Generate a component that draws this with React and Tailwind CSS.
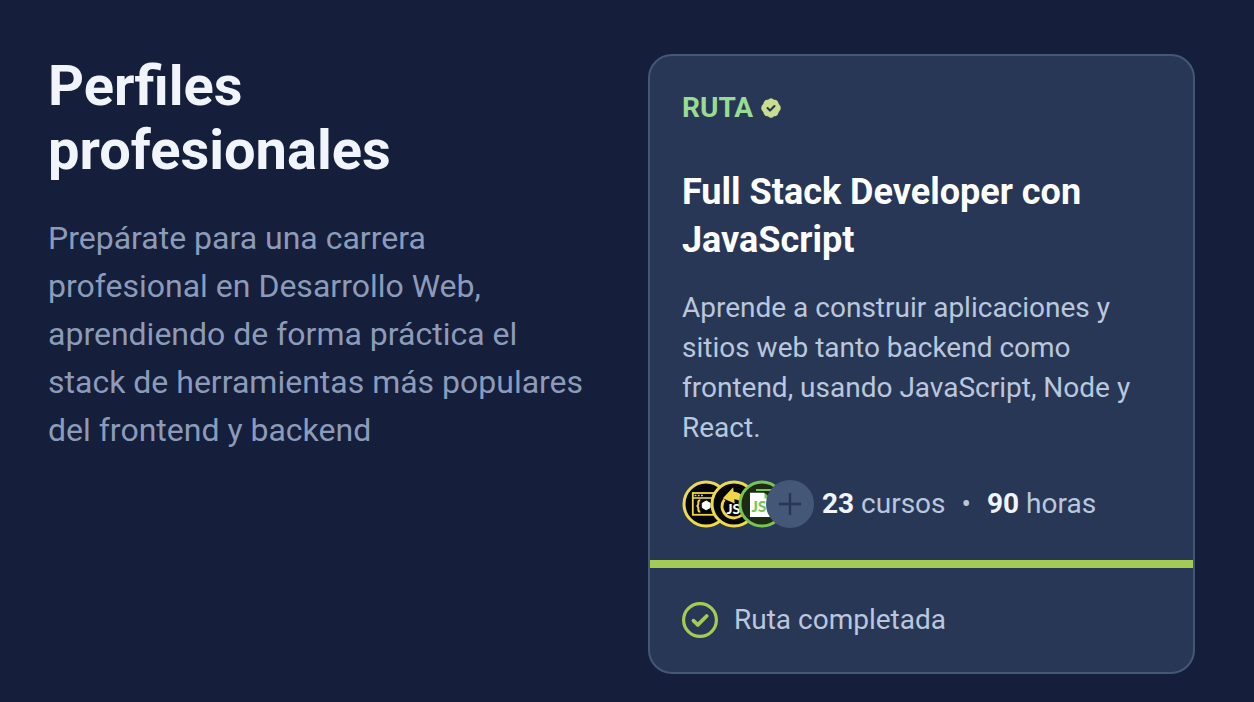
function VerifiedBadge() {
  return (
    <svg className="h-5 w-5" viewBox="0 0 20 20" aria-hidden="true">
      <path
        d="M10 0.2 Q11.7 0.2 12.9 1.8 Q15 1.4 16.4 2.9 Q17.6 4.2 17.7 5.9 Q19.8 7.4 19.8 10 Q19.8 12.6 17.7 14.1 Q17.6 15.8 16.4 17.1 Q15 18.6 12.9 18.2 Q11.7 19.8 10 19.8 Q8.3 19.8 7.1 18.2 Q5 18.6 3.6 17.1 Q2.4 15.8 2.3 14.1 Q0.2 12.6 0.2 10 Q0.2 7.4 2.3 5.9 Q2.4 4.2 3.6 2.9 Q5 1.4 7.1 1.8 Q8.3 0.2 10 0.2Z"
        fill="#c9dd8f"
      />
      <path d="M6.5 10.1 L9 12.6 L13.5 8" fill="none" stroke="#273655" strokeWidth="2.1" strokeLinecap="round" strokeLinejoin="round" />
    </svg>
  );
}

function WindowCourseIcon() {
  return (
    <svg className="h-12 w-12" viewBox="0 0 48 48" aria-hidden="true">
      <circle cx="24" cy="24" r="22" fill="#050505" stroke="#ecdc4a" strokeWidth="3" />
      <rect x="10.8" y="13" width="24" height="21.8" fill="none" stroke="#efd548" strokeWidth="1.8" />
      <path d="M10.6 18H35" stroke="#efd548" strokeWidth="1.6" />
      <path d="M12.6 15.5h1.8M15.8 15.5h1.8M19 15.5h1.8" stroke="#efd548" strokeWidth="1.5" />
      <path d="M18.3 20.3 Q16.3 20.3 16.3 22.3 V24 Q16.3 25.7 14.6 25.9 Q16.3 26.1 16.3 27.8 V29.7 Q16.3 31.7 18.3 31.7" fill="none" stroke="#efd548" strokeWidth="2" />
      <path d="M24.2 21 L28.1 23.2 V27.6 L24.2 29.8 L20.3 27.6 V23.2Z" fill="#fff" stroke="#fff" strokeLinejoin="round" />
    </svg>
  );
}

function LoopCourseIcon() {
  return (
    <svg className="h-12 w-12" viewBox="0 0 48 48" aria-hidden="true">
      <circle cx="24" cy="24" r="22" fill="#050505" stroke="#ecdc4a" strokeWidth="3" />
      <path d="M14.3 19.5 Q10.9 24.5 12.5 29.8 Q15.3 37.9 24 38 Q28.6 37.7 32 35" fill="none" stroke="#efd548" strokeWidth="2.8" />
      <path d="M12.8 18.2 L23.2 7.2 L23.6 11.8 Q30.4 12.4 34 17.6 V24.5 Q30 19.9 24.3 19.3 L24.7 23.4Z" fill="#efd548" />
      <text x="16.5" y="34" fill="#fff" fontFamily="Lato, sans-serif" fontWeight="900" fontSize="14">JS</text>
    </svg>
  );
}

function DocumentCourseIcon() {
  return (
    <svg className="h-12 w-12" viewBox="0 0 48 48" aria-hidden="true">
      <circle cx="24" cy="24" r="22" fill="#1b2b14" stroke="#79c454" strokeWidth="3" />
      <path d="M18 9.9H34V13" fill="none" stroke="#79c454" strokeWidth="2" />
      <path d="M12 12.8H26L33 19.5V37H12Z" fill="#fff" />
      <path d="M26.5 12.8V18.5H33Z" fill="#79c454" />
      <text x="13.5" y="31.5" fill="#79c454" fontFamily="Lato, sans-serif" fontWeight="900" fontSize="15">JS</text>
    </svg>
  );
}

function MoreCourses() {
  return (
    <svg className="h-12 w-12" viewBox="0 0 48 48" aria-hidden="true">
      <circle cx="24" cy="24" r="24" fill="#455777" />
      <path d="M24 13V35M13 24H35" stroke="#273655" strokeWidth="2.4" />
    </svg>
  );
}

function CompletedIcon() {
  return (
    <svg className="h-9 w-9" viewBox="0 0 36 36" aria-hidden="true">
      <circle cx="18" cy="18" r="16.4" fill="none" stroke="#a4cb53" strokeWidth="3.2" />
      <path d="M11.4 18.7 L15.8 22.9 L24.7 14" fill="none" stroke="#a4cb53" strokeWidth="3.8" strokeLinecap="round" strokeLinejoin="round" />
    </svg>
  );
}

function RouteCard() {
  return (
    <article className="overflow-hidden rounded-3xl border-2 border-[#455777] bg-[#293757]">
      <div className="p-8">
        <div className="flex items-center gap-2 text-[28px] leading-10 font-bold text-[#98dc92]">
          <span>RUTA</span>
          <VerifiedBadge />
        </div>
        <h2 className="mt-10 text-4xl leading-12 font-bold text-white">Full Stack Developer con JavaScript</h2>
        <p className="mt-6 text-[28px] leading-10 text-[#bac7dc]">
          Aprende a construir aplicaciones y sitios web tanto backend como frontend, usando JavaScript, Node y React.
        </p>
        <div className="mt-8 flex items-center gap-2">
          <div className="flex -space-x-5">
            <WindowCourseIcon />
            <LoopCourseIcon />
            <DocumentCourseIcon />
            <MoreCourses />
          </div>
          <div className="flex items-center gap-4 text-[28px] leading-10 text-[#bac7dc]">
            <span><strong className="font-bold text-[#f1f5fb]">23</strong> cursos</span>
            <span>•</span>
            <span><strong className="font-bold text-[#f1f5fb]">90</strong> horas</span>
          </div>
        </div>
      </div>
      <div className="h-2 bg-[#a4cb53]" />
      <div className="flex items-center gap-4 p-8 text-[28px] leading-10 text-[#bac7dc]">
        <CompletedIcon />
        <span>Ruta completada</span>
      </div>
    </article>
  );
}

export default function App() {
  return (
    <main className="min-h-screen bg-[#151e3a] pt-[54px] pr-[59px] pb-7 pl-12 font-[Roboto,sans-serif]">
      <div className="grid grid-cols-2 items-start gap-[53px]">
        <section className="pr-2">
          <h1 className="text-[56px] leading-16 font-bold text-[#f1f5fb]">
            Perfiles
            <br />
            profesionales
          </h1>
          <p className="mt-8 text-[32px] leading-12 text-[#8c9bb9]">
            Prepárate para una carrera profesional en Desarrollo Web, aprendiendo de forma práctica el stack de herramientas más populares del frontend y backend
          </p>
        </section>
        <RouteCard />
      </div>
    </main>
  );
}
